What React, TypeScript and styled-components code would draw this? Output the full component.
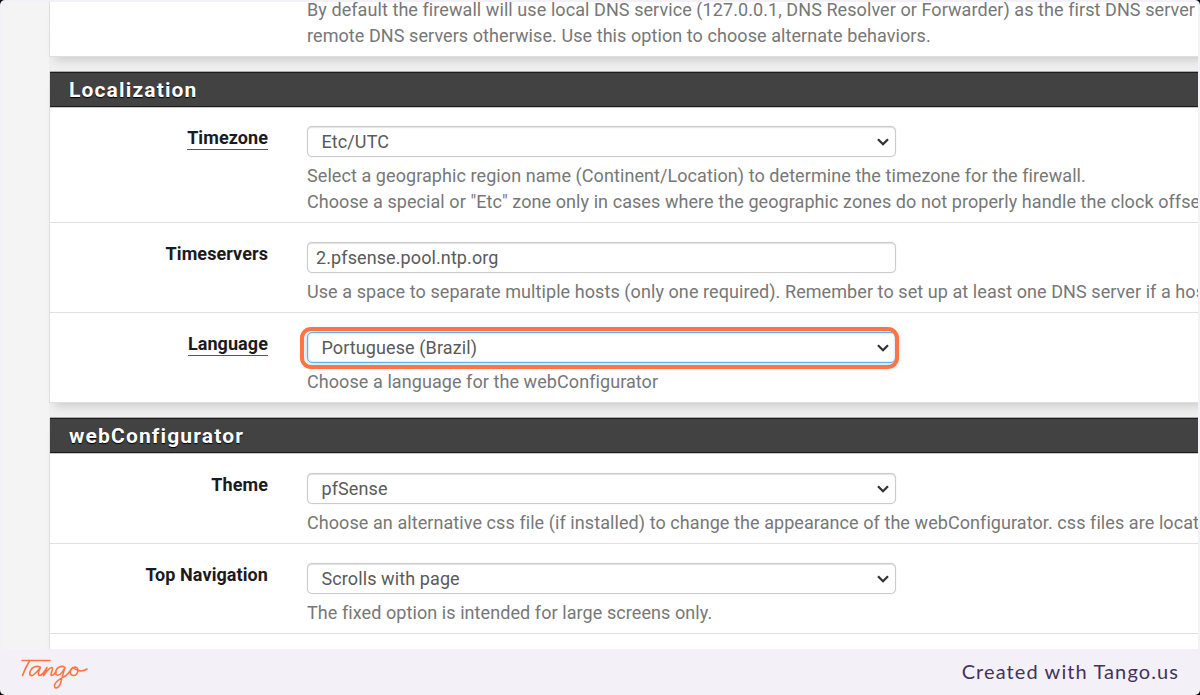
import React from "react";
import styled, { createGlobalStyle, css } from "styled-components";

const GlobalStyle = createGlobalStyle`
  * { box-sizing: border-box; }
  html, body { margin: 0; padding: 0; background: #000; }
`;

const Page = styled.div`
  display: flex;
  flex-direction: column;
  width: 1200px;
  height: 695px;
  padding: 2px 2px 0;
  overflow: hidden;
  background: #f3f1f7;
  border-radius: 5px;
  font-family: Roboto, sans-serif;
`;

const Viewport = styled.main`
  height: 647px;
  flex: none;
  padding-left: 47px;
  overflow: hidden;
  background: #f4f4f4;
  border-radius: 5px 5px 0 0;
`;

const Panel = styled.section<{ $height?: number }>`
  width: 1300px;
  height: ${(p) => (p.$height ? `${p.$height}px` : "auto")};
  margin-bottom: 15px;
  background: #fff;
  border: solid #dedede;
  border-width: 0 1px 1px;
  box-shadow: 0 9px 9px -6px rgba(0, 0, 0, 0.15), 0 15px 0 #efefef;
`;

const PanelHeading = styled.h2`
  height: 35px;
  margin: 0;
  padding-left: 19px;
  background: #424242;
  border: solid #1c1c1c;
  border-width: 1px 0;
  box-shadow: 0 -1px 0 #aaa, 0 1px 0 #c8c8c8;
  color: #fff;
  font-size: 21px;
  font-weight: 700;
  line-height: 34px;
  letter-spacing: 1.15px;
  text-shadow: 0 1px 1px #000;
`;

const Row = styled.div<{ $height: number; $top?: number }>`
  display: flex;
  height: ${(p) => p.$height}px;
  padding-top: ${(p) => p.$top ?? 19}px;
  border-bottom: 1px solid #e2e2e2;

  &:last-child {
    border-bottom: 0;
  }
`;

const LabelCell = styled.div`
  width: 218px;
  flex: none;
  margin: -1px 39px 0 0;
  text-align: right;
`;

const Label = styled.span<{ $underline?: boolean }>`
  display: inline-block;
  height: 25px;
  color: #1b1b1f;
  font-size: 18px;
  font-weight: 700;
  line-height: 26px;
  letter-spacing: 0.08px;
  border-bottom: ${(p) => (p.$underline ? "1.5px solid #55555a" : "0")};
`;

const Field = styled.div`
  flex: 1;
`;

const controlBox = css`
  display: flex;
  align-items: center;
  width: 589px;
  height: 31px;
  background: #fff;
  border: 1px solid #ccc;
  border-radius: 5px;
  box-shadow: inset 0 1px 1px rgba(0, 0, 0, 0.12), 0 0 1px rgba(0, 0, 0, 0.2);
  color: #5a5a5a;
  font-size: 18px;
  letter-spacing: 0.1px;
`;

const Select = styled.div<{ $focused?: boolean }>`
  ${controlBox}
  position: relative;
  justify-content: space-between;
  padding: 0 5px 0 13.5px;
  ${(p) =>
    p.$focused &&
    css`
      border-color: #66afe9;
      box-shadow: inset 0 0 2px rgba(102, 175, 233, 0.7), 0 0 10px rgba(102, 175, 233, 0.6);
    `}
`;

const TextInput = styled.div`
  ${controlBox}
  padding-left: 8px;
`;

const Highlight = styled.div`
  position: absolute;
  inset: -6px -4px -7px -8px;
  border: 4px solid #ff7442;
  border-radius: 11px;
`;

const Help = styled.p`
  margin: 6px 0 0;
  color: #777;
  font-size: 18px;
  line-height: 26px;
  letter-spacing: 0.075px;
  white-space: nowrap;
`;

const HelpLine = styled.span`
  display: block;
`;

const DnsHelp = styled(Help)`
  margin: -5px 0 0 257px;
`;

const Footer = styled.footer`
  display: flex;
  flex: none;
  height: 46px;
  align-items: center;
  justify-content: space-between;
  padding: 0 19px 0 18px;
`;

const Credit = styled.span`
  padding-bottom: 3px;
  color: #44325c;
  font-family: Lato, sans-serif;
  font-size: 20px;
  letter-spacing: 1.1px;
`;

const Chevron = () => (
  <svg width="14" height="10" viewBox="0 0 14 10" fill="none">
    <path d="M2 2.2 L7 7.2 L12 2.2" stroke="#333" strokeWidth="2.3" />
  </svg>
);

const TangoLogo = () => (
  <svg width="70" height="46" viewBox="0 0 70 46" fill="none" stroke="#ff7442" strokeWidth="1.6" strokeLinecap="round" strokeLinejoin="round">
    <path d="M2 11.500H30" />
    <path d="M9.500 12C7 16 4.500 21 2.500 26.500" />
    <path d="M20.500 18.500C17 16 12 18 10.300 22C8.700 26 11 28 14 25.500C17 23 19 20.500 20.500 18.500C18.500 22 17.500 26 19.500 26.500C22 26.500 25 22 27 18.500L23.500 26.500C27 22 29.500 18 32 18.500C34 19 29.500 26 31.500 26.500C33 26.500 34.500 25 36 23" />
    <path d="M45 18.500C42 16 37 18 35.800 22C34.800 26 37.500 27.500 40.500 25C43 22.500 44 20.500 45 18.500C43 24 42 30 40.500 34.500C38.500 39.500 34.500 40.500 34.500 36.500C34.500 32 42 29 46 26.500C50 23.500 51 18.500 55 18C59.500 18 58.500 26 53.500 26.500C49.500 26.500 49 21 53 18.500C57 22.500 63 23 67 20" />
  </svg>
);

type SettingProps = {
  label: string;
  height: number;
  top?: number;
  underline?: boolean;
  control: React.ReactNode;
  help: string[];
};

const Setting = ({ label, height, top, underline, control, help }: SettingProps) => (
  <Row $height={height} $top={top}>
    <LabelCell>
      <Label $underline={underline}>{label}</Label>
    </LabelCell>
    <Field>
      {control}
      <Help>
        {help.map((line) => (
          <HelpLine key={line}>{line}</HelpLine>
        ))}
      </Help>
    </Field>
  </Row>
);

const Clip = styled.div`
  display: flow-root;
  height: 54px;
`;

export default function App() {
  return (
    <>
      <GlobalStyle />
      <Page>
        <Viewport>
          <Panel $height={55}>
            <Clip>
              <DnsHelp>
                <HelpLine>By default the firewall will use local DNS service (127.0.0.1, DNS Resolver or Forwarder) as the first DNS server</HelpLine>
                <HelpLine>remote DNS servers otherwise. Use this option to choose alternate behaviors.</HelpLine>
              </DnsHelp>
            </Clip>
          </Panel>
          <Panel $height={331}>
            <PanelHeading>Localization</PanelHeading>
            <Setting
              label="Timezone"
              height={116}
              underline
              control={<Select>Etc/UTC<Chevron /></Select>}
              help={[
                "Select a geographic region name (Continent/Location) to determine the timezone for the firewall.",
                'Choose a special or "Etc" zone only in cases where the geographic zones do not properly handle the clock offset',
              ]}
            />
            <Setting
              label="Timeservers"
              height={90}
              control={<TextInput>2.pfsense.pool.ntp.org</TextInput>}
              help={["Use a space to separate multiple hosts (only one required). Remember to set up at least one DNS server if a host"]}
            />
            <Setting
              label="Language"
              height={89}
              underline
              control={<Select $focused>Portuguese (Brazil)<Chevron /><Highlight /></Select>}
              help={["Choose a language for the webConfigurator"]}
            />
          </Panel>
          <Panel>
            <PanelHeading>webConfigurator</PanelHeading>
            <Setting
              label="Theme"
              height={91}
              top={20}
              control={<Select>pfSense<Chevron /></Select>}
              help={["Choose an alternative css file (if installed) to change the appearance of the webConfigurator. css files are located"]}
            />
            <Setting
              label="Top Navigation"
              height={90}
              control={<Select>Scrolls with page<Chevron /></Select>}
              help={["The fixed option is intended for large screens only."]}
            />
            <Clip />
          </Panel>
        </Viewport>
        <Footer>
          <TangoLogo />
          <Credit>Created with Tango.us</Credit>
        </Footer>
      </Page>
    </>
  );
}
